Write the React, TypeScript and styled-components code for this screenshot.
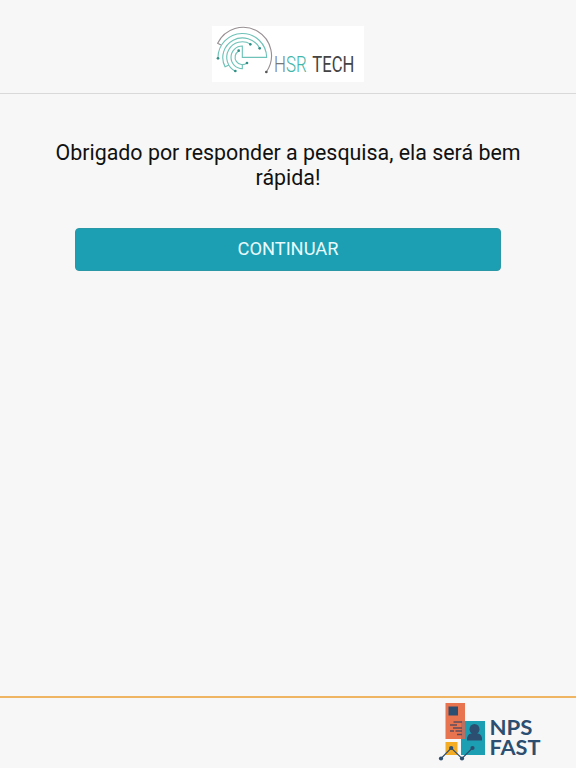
import React from 'react';
import styled, { createGlobalStyle } from 'styled-components';

const GlobalStyle = createGlobalStyle`
  * { box-sizing: border-box; }
  body { margin: 0; background: #f7f7f7; font-family: Roboto, sans-serif; }
`;

const Page = styled.div`
  display: flex;
  flex-direction: column;
  height: 100vh;
  background: #f7f7f7;
`;

const Header = styled.header`
  display: flex;
  justify-content: center;
  height: 94px;
  padding-top: 26px;
  border-bottom: 1px solid #d9d9d9;
`;

const CompanyLogo = styled.svg`
  display: block;
  width: 152px;
  height: 56px;
  background: #fff;
`;

const Content = styled.main`
  flex: 1;
  display: flex;
  flex-direction: column;
  align-items: center;
  padding: 46px 50px 0;
`;

const Message = styled.h1`
  margin: 0;
  font-size: 21.4px;
  font-weight: 400;
  line-height: 25px;
  text-align: center;
  color: #111;
`;

const ContinueButton = styled.button`
  width: 426px;
  height: 43px;
  margin-top: 37.5px;
  padding: 0 0 2px;
  border: 1px solid #2b98a8;
  border-radius: 4px;
  background: #1c9fb2;
  color: #e9fbfd;
  font: 400 18.3px Roboto, sans-serif;
`;

const Footer = styled.footer`
  display: flex;
  justify-content: flex-end;
  height: 72px;
  padding: 4px 32px 0 0;
  border-top: 2px solid #f0b562;
`;

const ProductLogo = styled.svg`
  display: block;
  width: 108px;
  height: 64px;
`;

const HsrLogo = () => (
  <CompanyLogo viewBox="21 18 456 168" role="img" aria-label="HSR Tech">
    <g fill="none" strokeWidth="3.4">
      <path d="M48 75 L38 70 A85 85 0 1 1 184 156" stroke="#978f93" />
      <g stroke="#6fc2b8">
        <path d="M39 115 A73 73 0 1 1 185 112 H112 V78 A34 34 0 0 0 112 146 V134" />
        <path d="M164.4 84.8 A59 59 0 1 0 60.4 140.6 L72 135" />
        <path d="M136.4 72.4 A46.5 46.5 0 1 0 90.9 153.4" />
        <path d="M101.4 92.7 A22 22 0 1 0 126 129" />
      </g>
    </g>
    <g fill="#328f86">
      <circle cx="39" cy="115" r="4" />
      <circle cx="164" cy="85" r="4" />
      <circle cx="136" cy="73" r="4" />
      <circle cx="101" cy="92" r="4" />
      <circle cx="126" cy="129" r="4" />
      <circle cx="91" cy="153" r="4" />
      <circle cx="184" cy="156" r="4" fill="#555" />
    </g>
    <g fontFamily="Roboto, sans-serif" fontSize="65">
      <text x="207" y="156" fontWeight="300" fill="#777" textLength="98" lengthAdjust="spacingAndGlyphs">
        H<tspan fill="#43b5a8">SR</tspan>
      </text>
      <text x="322" y="156" fontWeight="400" fill="#444" textLength="126" lengthAdjust="spacingAndGlyphs">TECH</text>
    </g>
  </CompanyLogo>
);

const NpsLogo = () => (
  <ProductLogo viewBox="0 0 108 64" role="img" aria-label="NPS Fast">
    <rect x="9.5" y="1" width="19.5" height="36" fill="#e8744f" />
    <rect x="25" y="19" width="24" height="34" fill="#1c9fb2" />
    <path d="M25 19H29V37H25Z" fill="#b96f61" />
    <rect x="9.5" y="40" width="12" height="13" fill="#f4ac24" />
    <rect x="12.5" y="4.5" width="9.5" height="9" fill="#2c4e70" />
    <path d="M17.5 20h8.5M14 23h7M17 26h9M14 29h4M19.5 29H26M21 32.5h5" stroke="#5d4c5e" strokeWidth="1.5" />
    <ellipse cx="38.5" cy="27.3" rx="5" ry="5.2" fill="#2c4e70" />
    <path d="M31 38.5Q30.5 32.5 35 31.5H42Q46.5 32.5 46 38.5Z" fill="#2c4e70" />
    <path d="M5 56.5 15.2 46 26 56.5 36.5 46" fill="none" stroke="#2c4e70" strokeWidth="1.1" />
    <g fill="#2c4e70">
      <circle cx="5" cy="56.5" r="2.1" />
      <circle cx="15.2" cy="46" r="2.1" />
      <circle cx="26" cy="56.5" r="2.1" />
      <circle cx="36.5" cy="46" r="2.1" />
    </g>
    <g fill="#2c4e70" fontFamily="Lato, sans-serif" fontSize="20.5" fontWeight="700">
      <text x="53.5" y="33.3" textLength="43" lengthAdjust="spacingAndGlyphs">NPS</text>
      <text x="53.5" y="53" textLength="51" lengthAdjust="spacingAndGlyphs">FAST</text>
    </g>
  </ProductLogo>
);

export default function App() {
  return (
    <>
      <GlobalStyle />
      <Page>
        <Header><HsrLogo /></Header>
        <Content>
          <Message>Obrigado por responder a pesquisa, ela será bem rápida!</Message>
          <ContinueButton type="button">CONTINUAR</ContinueButton>
        </Content>
        <Footer><NpsLogo /></Footer>
      </Page>
    </>
  );
}
